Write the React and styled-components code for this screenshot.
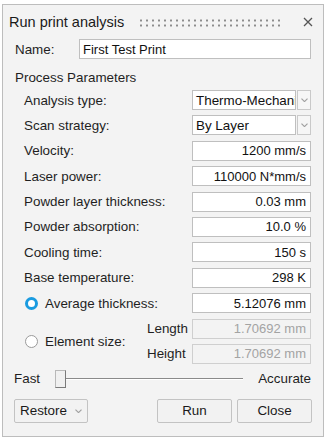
import React, { useState } from 'react';
import styled, { createGlobalStyle } from 'styled-components';

const GlobalStyle = createGlobalStyle`
  body {
    margin: 0;
    background: #ffffff;
    font-family: "Liberation Sans", Arial, sans-serif;
    color: #1f1f1f;
  }
`;

const Panel = styled.div`
  box-sizing: border-box;
  width: 322px;
  height: 433px;
  margin: 4px 0 0 2px;
  border: 1px solid #bdbdbd;
  background: #f3f3f3;
  display: flex;
  flex-direction: column;
`;

const TitleBar = styled.div`
  height: 34px;
  display: flex;
  align-items: center;
  padding: 0 10px 0 6px;
  gap: 15px;
`;

const Title = styled.span`
  font-size: 14.5px;
  color: #1a1a1a;
  white-space: nowrap;
`;

const Grip = styled.div`
  flex: 1;
  height: 9px;
  background-image: radial-gradient(circle, #8c8c8c 0.9px, transparent 1.3px);
  background-size: 6px 5px;
  background-position: -1px 0;
`;

const CloseX = styled.button`
  border: none;
  background: transparent;
  padding: 0;
  width: 10px;
  height: 10px;
  display: flex;
  margin-left: 4px;
`;

const NameRow = styled.div`
  display: flex;
  align-items: center;
  height: 20px;
  padding: 0 12px;
`;

const NameLabel = styled.span`
  width: 64px;
  font-size: 13.4px;
`;

const Field = styled.div`
  box-sizing: border-box;
  height: 20px;
  width: ${p => p.$width || '119px'};
  flex: ${p => (p.$grow ? 1 : 'none')};
  border: 1px solid ${p => (p.$disabled ? '#cfcfcf' : '#bfbfbf')};
  background: ${p => (p.$disabled ? '#f3f3f3' : '#ffffff')};
  color: ${p => (p.$disabled ? '#a3a3a3' : '#111111')};
  font-size: 13px;
  display: flex;
  align-items: center;
  justify-content: ${p => (p.$right ? 'flex-end' : 'flex-start')};
  padding: 0 4px 0 3px;
  white-space: nowrap;
  overflow: hidden;
`;

const SectionTitle = styled.div`
  height: 20px;
  margin-top: 8px;
  padding-left: 12px;
  display: flex;
  align-items: center;
  font-size: 13.4px;
`;

const ParamList = styled.div`
  margin-top: 3px;
  padding: 0 12px 0 21px;
  display: flex;
  flex-direction: column;
  gap: 5.4px;
`;

const Row = styled.div`
  display: grid;
  grid-template-columns: 1fr 119px;
  align-items: center;
  height: 20px;
`;

const Label = styled.span`
  font-size: 13.4px;
  white-space: nowrap;
`;

const SelectBox = styled.div`
  display: flex;
  gap: 1px;
  height: 20px;
`;

const SelectText = styled.div`
  box-sizing: border-box;
  flex: 1;
  border: 1px solid #bfbfbf;
  background: #fff;
  font-size: 13.4px;
  color: #111;
  display: flex;
  align-items: center;
  padding-left: 3px;
  white-space: nowrap;
  overflow: hidden;
`;

const SelectButton = styled.div`
  box-sizing: border-box;
  width: 14px;
  border: 1px solid #c9c9c9;
  background: #f6f6f6;
  display: flex;
  align-items: center;
  justify-content: center;
`;

const RadioLabel = styled.label`
  display: flex;
  align-items: center;
  gap: 7px;
  font-size: 13.4px;
  white-space: nowrap;
`;

const RadioDot = styled.span`
  box-sizing: border-box;
  width: 13px;
  height: 13px;
  border-radius: 50%;
  margin-left: 1px;
  background: #fff;
  border: ${p => (p.$on ? '3.5px solid #1a9be0' : '1px solid #9a9a9a')};
`;

const ElementGrid = styled.div`
  display: grid;
  grid-template-columns: 1fr 45px 119px;
  grid-template-rows: 20px 20px;
  row-gap: 5.4px;
  align-items: center;
`;

const SpanCell = styled.div`
  grid-row: 1 / span 2;
  align-self: center;
`;

const SubLabel = styled.span`
  font-size: 13.4px;
  white-space: nowrap;
`;

const SliderRow = styled.div`
  margin-top: 6px;
  height: 18px;
  padding: 0 12px 0 11px;
  display: flex;
  align-items: center;
`;

const SliderEnd = styled.span`
  font-size: 13.4px;
  width: ${p => p.$width};
  text-align: ${p => p.$align || 'left'};
`;

const Track = styled.div`
  width: 188px;
  height: 18px;
  display: flex;
  align-items: center;
  position: relative;
  &::before {
    content: '';
    position: absolute;
    left: 0;
    right: 0;
    top: 8px;
    height: 1px;
    background: #8a8a8a;
    border-bottom: 1px solid #ffffff;
  }
`;

const Thumb = styled.div`
  position: relative;
  box-sizing: border-box;
  width: 11px;
  height: 18px;
  background: #f0f0f0;
  border: 1px solid #b8b8b8;
  border-right-color: #7a7a7a;
  border-bottom-color: #7a7a7a;
  z-index: 1;
`;

const ButtonRow = styled.div`
  margin-top: 11px;
  padding: 0 11px 0 11px;
  display: flex;
  gap: 5px;
`;

const Button = styled.button`
  box-sizing: border-box;
  width: ${p => p.$width || '75px'};
  height: 24px;
  margin-right: ${p => (p.$push ? 'auto' : '0')};
  border: 1px solid #c3c3c3;
  border-radius: 2px;
  background: #f2f2f2;
  font-family: "Liberation Sans", Arial, sans-serif;
  font-size: 13.4px;
  color: #1a1a1a;
  display: flex;
  align-items: center;
  justify-content: center;
  gap: 8px;
  padding: 0;
`;

const Chevron = ({ size = 7 }) => (
  <svg width={size} height={size * 0.6} viewBox="0 0 7 4">
    <path d="M0.5 0.5 L3.5 3.5 L6.5 0.5" fill="none" stroke="#a0a0a0" strokeWidth="1.2" />
  </svg>
);

const Select = ({ value }) => (
  <SelectBox>
    <SelectText>{value}</SelectText>
    <SelectButton>
      <Chevron />
    </SelectButton>
  </SelectBox>
);

const params = [
  ['Velocity:', '1200 mm/s'],
  ['Laser power:', '110000 N*mm/s'],
  ['Powder layer thickness:', '0.03 mm'],
  ['Powder absorption:', '10.0 %'],
  ['Cooling time:', '150 s'],
  ['Base temperature:', '298 K'],
];

export default function App() {
  const [mode, setMode] = useState('average');
  return (
    <>
      <GlobalStyle />
      <Panel>
        <TitleBar>
          <Title>Run print analysis</Title>
          <Grip />
          <CloseX aria-label="Close">
            <svg width="10" height="10" viewBox="0 0 10 10">
              <path d="M1 1 L9 9 M9 1 L1 9" stroke="#555" strokeWidth="1.3" />
            </svg>
          </CloseX>
        </TitleBar>

        <NameRow>
          <NameLabel>Name:</NameLabel>
          <Field $grow>First Test Print</Field>
        </NameRow>

        <SectionTitle>Process Parameters</SectionTitle>

        <ParamList>
          <Row>
            <Label>Analysis type:</Label>
            <Select value="Thermo-Mechanical" />
          </Row>
          <Row>
            <Label>Scan strategy:</Label>
            <Select value="By Layer" />
          </Row>
          {params.map(([label, value]) => (
            <Row key={label}>
              <Label>{label}</Label>
              <Field $right>{value}</Field>
            </Row>
          ))}
          <Row>
            <RadioLabel onClick={() => setMode('average')}>
              <RadioDot $on={mode === 'average'} />
              Average thickness:
            </RadioLabel>
            <Field $right>5.12076 mm</Field>
          </Row>
          <ElementGrid>
            <SpanCell>
              <RadioLabel onClick={() => setMode('element')}>
                <RadioDot $on={mode === 'element'} />
                Element size:
              </RadioLabel>
            </SpanCell>
            <SubLabel>Length</SubLabel>
            <Field $right $disabled={mode !== 'element'}>1.70692 mm</Field>
            <SubLabel>Height</SubLabel>
            <Field $right $disabled={mode !== 'element'}>1.70692 mm</Field>
          </ElementGrid>
        </ParamList>

        <SliderRow>
          <SliderEnd $width="41px">Fast</SliderEnd>
          <Track>
            <Thumb />
          </Track>
          <SliderEnd $width="68px" $align="right">Accurate</SliderEnd>
        </SliderRow>

        <ButtonRow>
          <Button $width="74px" $push>
            Restore
            <Chevron size={7} />
          </Button>
          <Button>Run</Button>
          <Button>Close</Button>
        </ButtonRow>
      </Panel>
    </>
  );
}
